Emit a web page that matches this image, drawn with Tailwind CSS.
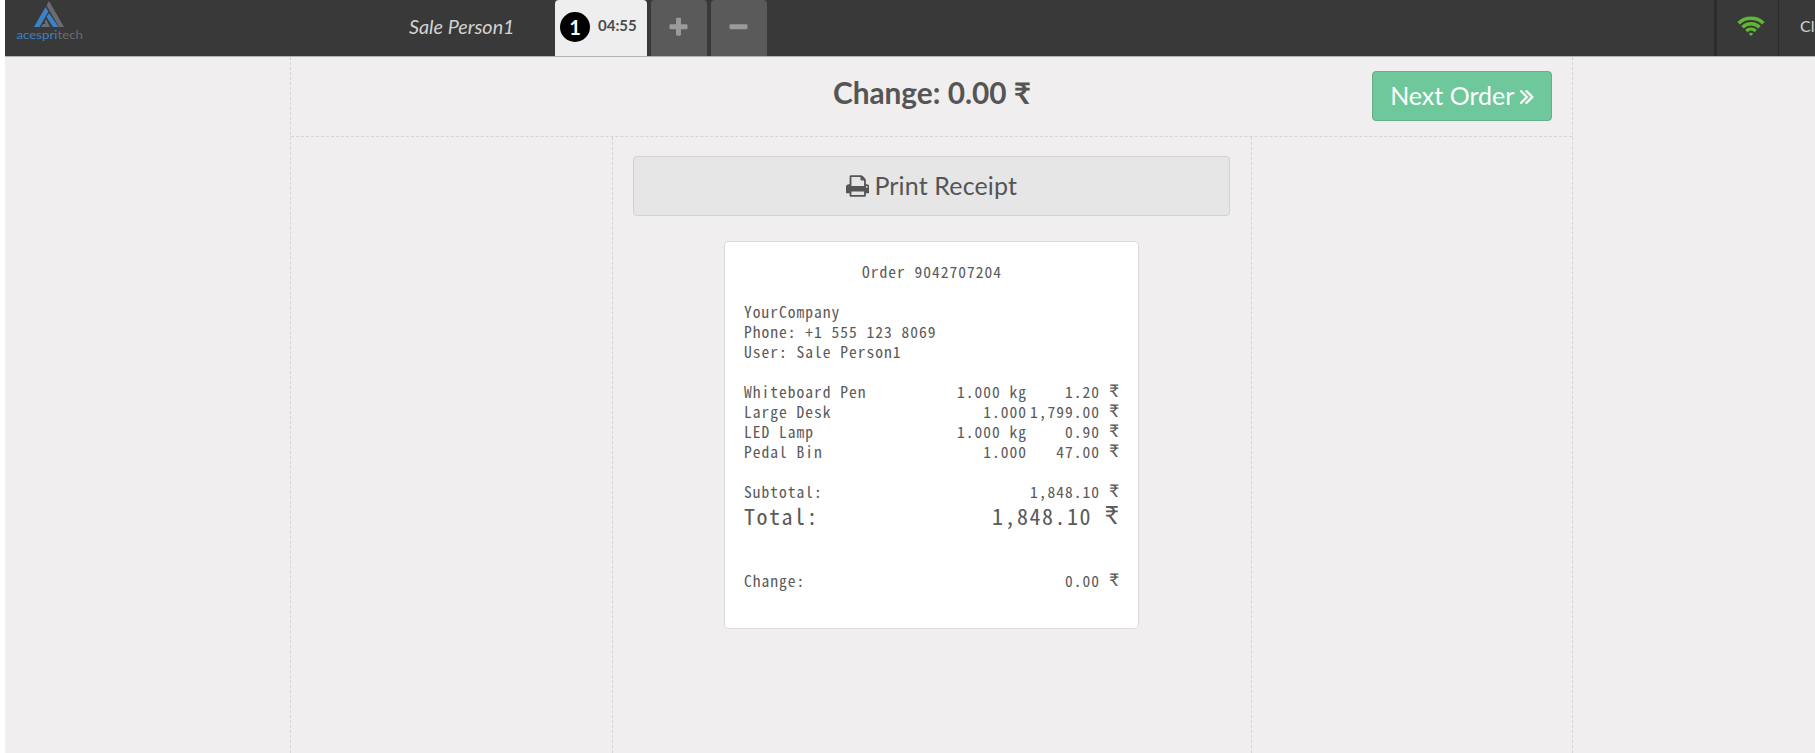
<!DOCTYPE html>
<html lang="en">
<head>
<meta charset="utf-8">
<title>Point of Sale</title>
<script src="https://cdn.jsdelivr.net/npm/@tailwindcss/browser@4"></script>
</head>
<body class="h-screen overflow-hidden bg-white pl-[5px] font-['Lato','Liberation_Sans',sans-serif] text-[#555555]">
<div class="flex h-full flex-col bg-[#f0eeee]">
  <header class="flex h-[57px] shrink-0 overflow-hidden border-b border-[#b4b2b2] bg-[#393939]">
    <div class="w-[404px] shrink-0">
      <svg class="ml-[5px] h-[46px] w-20" viewBox="0 0 80 46">
        <path d="M35.500 7L38.500 11.500L29.500 27H24Z" fill="#3b82c8"/>
        <path d="M39 1L54 27H49L36.500 5.500Z" fill="#6b6b73"/>
        <path d="M39 13L48.500 27H43L36.500 17Z" fill="#3b82c8"/>
        <path d="M36 19L40 27H31L33 24H35.500L34.500 22Z" fill="#6b6b73"/>
        <text x="6.500" y="39" font-size="11.500" textLength="66.500" lengthAdjust="spacingAndGlyphs" font-family="Lato, sans-serif" fill="#3b82c8">acespri<tspan fill="#6b6b73">tech</tspan></text>
      </svg>
    </div>
    <div class="w-[146px] shrink-0 text-[19.8px] leading-[53px] text-[#d3d3d3] italic">Sale Person1</div>
    <div class="flex gap-1">
      <div class="flex w-[92px] items-start rounded-t-[4px] bg-[#eeeeee] pl-[5px]">
        <span class="mt-3 flex size-[30px] items-center justify-center rounded-full bg-black text-xl font-bold text-white">1</span>
        <span class="ml-2 text-[15px] leading-[51px] font-bold text-[#4c4c4c]">04:55</span>
      </div>
      <div class="flex w-14 items-center justify-center rounded-t-[4px] bg-[#5a5a5a] pr-px pb-px text-[#9b9b9b]">
        <svg class="size-[23px]" viewBox="0 0 1792 1792" fill="currentColor"><path d="M1600 736v192q0 40-28 68t-68 28h-416v416q0 40-28 68t-68 28h-192q-40 0-68-28t-28-68v-416h-416q-40 0-68-28t-28-68v-192q0-40 28-68t68-28h416v-416q0-40 28-68t68-28h192q40 0 68 28t28 68v416h416q40 0 68 28t28 68z"/></svg>
      </div>
      <div class="flex w-14 items-center justify-center rounded-t-[4px] bg-[#5a5a5a] pr-px pb-px text-[#9b9b9b]">
        <svg class="size-[23px]" viewBox="0 0 1792 1792" fill="currentColor"><path d="M1600 736v192q0 40-28 68t-68 28h-1216q-40 0-68-28t-28-68v-192q0-40 28-68t68-28h1216q40 0 68 28t28 68z"/></svg>
      </div>
    </div>
    <div class="ml-auto flex w-[101px] shrink-0 border-l-[3px] border-[#2b2b2b]">
      <div class="w-[61px] shrink-0 pt-4 pl-5">
        <svg class="h-5 w-7" viewBox="0 0 28 20" fill="none" stroke="#5fb832" stroke-width="3.600">
          <path d="M1.600 7.200A18 18 0 0 1 26.400 7.200"/>
          <path d="M5.500 11.200A12.200 12.200 0 0 1 22.500 11.200"/>
          <path d="M9.300 15A7 7 0 0 1 18.700 15" stroke-width="3.200"/>
          <path d="M14 20L11.700 17.700Q14 15.800 16.300 17.700Z" fill="#5fb832" stroke="none"/>
        </svg>
      </div>
      <div class="shrink-0 border-l border-[#2b2b2b] pl-[21px] text-base leading-[52px] text-[#d3d3d3]">Close</div>
    </div>
  </header>

  <main class="ml-[285px] flex w-[1283px] grow flex-col border-x border-dashed border-[#d6d4d4]">
    <div class="grid h-20 shrink-0 grid-cols-[1fr_auto_1fr] border-b border-dashed border-[#d6d4d4]">
      <h1 class="col-start-2 pl-px text-[29.8px] leading-[71px] font-bold">Change: 0.00 ₹</h1>
      <div class="mt-[14px] mr-5 flex h-[50px] w-[180px] items-center justify-center gap-1.5 justify-self-end rounded-[4px] border border-[#64af8a] bg-[#6ec89b] text-[25px] text-white">
        <span>Next Order</span>
        <svg class="mt-0.5 h-[14px] w-[13.5px]" viewBox="397 461 966 998" fill="currentColor" stroke="currentColor" stroke-width="40"><path d="M979 960q0 13-10 23l-466 466q-10 10-23 10t-23-10l-50-50q-10-10-10-23t10-23l393-393-393-393q-10-10-10-23t10-23l50-50q10-10 23-10t23 10l466 466q10 10 10 23zm384 0q0 13-10 23l-466 466q-10 10-23 10t-23-10l-50-50q-10-10-10-23t10-23l393-393-393-393q-10-10-10-23t10-23l50-50q10-10 23-10t23 10l466 466q10 10 10 23z"/></svg>
      </div>
    </div>
    <div class="ml-[321px] flex w-[640px] grow flex-col border-x border-dashed border-[#d6d4d4] pt-[19px] pr-[21px] pl-5">
      <div class="flex h-[60px] items-center justify-center gap-[5px] rounded-[4px] border border-[#d2d2d2] bg-[#e6e6e6] text-[25px] tracking-[0.15px]">
        <svg class="h-[22px] w-[23.5px]" viewBox="64 128 1664 1536" fill="currentColor"><path d="M448 1536h896v-256h-896v256zm0-640h896v-384h-160q-40 0-68-28t-28-68v-160h-640v640zm1152 64q0-26-19-45t-45-19-45 19-19 45 19 45 45 19 45-19 19-45zm128 0v416q0 13-9.500 22.500t-22.500 9.500h-224v160q0 40-28 68t-68 28h-960q-40 0-68-28t-28-68v-160h-224q-13 0-22.500-9.500t-9.500-22.500v-416q0-79 56.500-135.500t135.500-56.500h64v-544q0-40 28-68t68-28h672q40 0 88 20t76 48l152 152q28 28 48 76t20 88v256h64q79 0 135.500 56.500t56.500 135.500z"/></svg>
        <span>Print Receipt</span>
      </div>
      <section class="mt-[25px] ml-[91px] flex h-[388px] w-[415px] flex-col rounded-[4px] border border-[#dddcdc] bg-white pt-[18.5px] pr-[19px] pl-[19px] font-['Noto_Sans_Mono_CJK_SC','Liberation_Mono',monospace] text-[15.5px] leading-5 tracking-[1px] whitespace-pre text-[#5a5a5a]">
        <div class="pl-px text-center">Order 9042707204</div>
        <div class="mt-5">YourCompany</div>
        <div>Phone: +1 555 123 8069</div>
        <div>User: Sale Person1</div>
        <div class="mt-5 grid auto-rows-[20px] grid-cols-[187px_96px_92px] text-right">
          <span class="text-left">Whiteboard Pen</span><span>1.000 kg</span><span>1.20 <b class="align-[1px] font-['Lato'] text-[17.5px] leading-none font-normal tracking-normal">₹</b></span>
          <span class="text-left">Large Desk</span><span>1.000</span><span>1,799.00 <b class="align-[1px] font-['Lato'] text-[17.5px] leading-none font-normal tracking-normal">₹</b></span>
          <span class="text-left">LED Lamp</span><span>1.000 kg</span><span>0.90 <b class="align-[1px] font-['Lato'] text-[17.5px] leading-none font-normal tracking-normal">₹</b></span>
          <span class="text-left">Pedal Bin</span><span>1.000</span><span>47.00 <b class="align-[1px] font-['Lato'] text-[17.5px] leading-none font-normal tracking-normal">₹</b></span>
        </div>
        <div class="mt-5 flex h-5 justify-between"><span>Subtotal:</span><span>1,848.10 <b class="align-[1px] font-['Lato'] text-[17.5px] leading-none font-normal tracking-normal">₹</b></span></div>
        <div class="flex h-[30px] justify-between text-[22px] leading-[29px] tracking-[1.5px]"><span>Total:</span><span>1,848.10 <b class="align-[1px] font-['Lato'] text-[25px] leading-none font-normal tracking-normal">₹</b></span></div>
        <div class="mt-[39px] flex h-5 justify-between"><span>Change:</span><span>0.00 <b class="align-[1px] font-['Lato'] text-[17.5px] leading-none font-normal tracking-normal">₹</b></span></div>
      </section>
    </div>
  </main>
</div>
</body>
</html>
